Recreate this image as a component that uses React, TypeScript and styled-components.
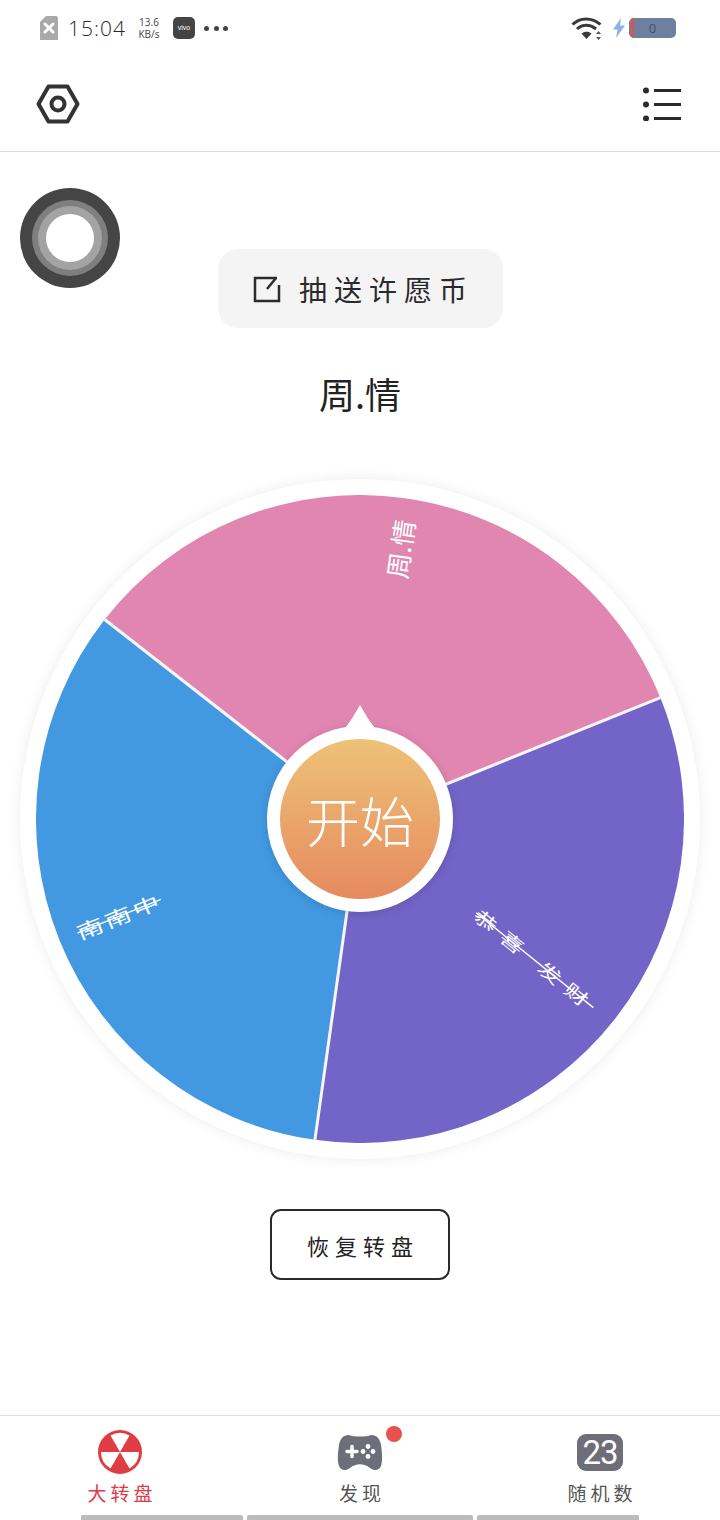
import styled, { createGlobalStyle } from "styled-components";

const GlobalStyle = createGlobalStyle`
  html, body { margin: 0; padding: 0; background: #fff; }
  * { box-sizing: border-box; }
`

const CJK = `"Noto Sans CJK SC", "Liberation Sans", sans-serif`

// start angle of the pink slice, each slice takes 120deg
const START = -142
const slices = [
  { color: "#e086b1" },
  { color: "#7364c8" },
  { color: "#4299e2" },
]

const polar = (deg: number, r: number, c = 324) => {
  const a = (deg * Math.PI) / 180
  return `${(c + r * Math.cos(a)).toFixed(2)} ${(c + r * Math.sin(a)).toFixed(2)}`
}

const wedge = (from: number, to: number, r: number) => {
  const a = (from * Math.PI) / 180
  const b = (to * Math.PI) / 180
  const p = (t: number) => `${(r * Math.cos(t)).toFixed(2)} ${(r * Math.sin(t)).toFixed(2)}`
  return `M0 0 L${p(a)} A${r} ${r} 0 0 1 ${p(b)} Z`
}

const App = () => {
  return (
    <Page>
      <GlobalStyle />
      <StatusBar>
        <StatusLeft>
          <svg width="18" height="24" viewBox="0 0 18 24">
            <path d="M6 0H16a2 2 0 0 1 2 2V24H0V6Z" fill="#a9a9a9" />
            <path d="M5 8l8 8M13 8l-8 8" stroke="#fff" strokeWidth="3" strokeLinecap="round" />
          </svg>
          <Clock>15:04</Clock>
          <Speed>13.6<br />KB/s</Speed>
          <VivoBadge>vivo</VivoBadge>
          <Dots>
            <i /><i /><i />
          </Dots>
        </StatusLeft>
        <StatusRight>
          <WifiIcon width="32" height="24" viewBox="0 0 32 24" fill="none">
            <path d="M1.500 8.500C9 1 21 1 29.500 8.500" stroke="#3a3a3a" strokeWidth="3" />
            <path d="M6 13c5.500-5 13-5 19 0" stroke="#3a3a3a" strokeWidth="3" />
            <path d="M10.500 17.500c3-2.500 7-2.500 10 0L15.500 23Z" fill="#3a3a3a" />
            <path d="M27.500 15l2.500 3h-5ZM27.500 24l2.500-3h-5Z" fill="#555" />
          </WifiIcon>
          <svg width="12" height="20" viewBox="0 0 12 20">
            <path d="M8 0L0 11.500h4.500L3 20 12 7.500H7Z" fill="#8cb0ee" />
          </svg>
          <Battery>
            <BatteryLevel />
            0
          </Battery>
        </StatusRight>
      </StatusBar>

      <Header>
        <svg width="44" height="40" viewBox="0 0 44 40" fill="none">
          <path d="M12.500 2.500H31.500L41.500 20 31.500 37.500H12.500L2.500 20Z" stroke="#333" strokeWidth="4" strokeLinejoin="round" />
          <circle cx="22" cy="20" r="6.500" stroke="#333" strokeWidth="4" />
        </svg>
        <svg width="40" height="34" viewBox="0 0 40 34">
          <circle cx="4" cy="3.500" r="3" fill="#2b2b2b" />
          <circle cx="4" cy="17.500" r="3" fill="#2b2b2b" />
          <circle cx="4" cy="31.500" r="3" fill="#2b2b2b" />
          <path d="M12 3.500H39M12 17.500H39M12 31.500H39" stroke="#2b2b2b" strokeWidth="3" />
        </svg>
      </Header>

      <Main>
        <FloatBall />
        <WishButton>
          <svg width="28" height="28" viewBox="0 0 28 28" fill="none">
            <path d="M24 3H2V26H26V10" stroke="#2b2b2b" strokeWidth="2.500" />
            <path d="M14 14L23 3" stroke="#2b2b2b" strokeWidth="2.500" />
          </svg>
          <WishText>抽送许愿币</WishText>
        </WishButton>
        <Result>周.情</Result>

        <Wheel>
          <svg width="648" height="648" viewBox="0 0 648 648">
            {slices.map((s, i) => {
              const from = START + i * 120
              return (
                <path
                  key={s.color}
                  d={`M324 324 L${polar(from, 324)} A324 324 0 0 1 ${polar(from + 120, 324)} Z`}
                  fill={s.color}
                />
              )
            })}
            {slices.map((s, i) => (
              <path
                key={s.color}
                d={`M324 324 L${polar(START + i * 120, 324)}`}
                stroke="#f6f6fb"
                strokeWidth="3"
              />
            ))}
          </svg>
          <SliceLabel $x={380} $y={70} $angle={-82}>周.情</SliceLabel>
          <SliceLabel $x={515} $y={481} $angle={39} $size={25} $spacing={9} $squash>恭喜 发财</SliceLabel>
          <SliceLabel $x={99} $y={437} $angle={-22} $size={27} $spacing={3} $squash>南南中</SliceLabel>
          <Hub>
            <StartButton>开始</StartButton>
          </Hub>
        </Wheel>

        <RestoreButton>恢复转盘</RestoreButton>
      </Main>

      <TabBar>
        <Tab $active>
          <svg width="44" height="44" viewBox="-22 -22 44 44">
            <circle r="22" fill="#e03c44" />
            <path d={wedge(-120, -60, 19)} fill="#fff" />
            <path d={wedge(0, 60, 19)} fill="#fff" />
            <path d={wedge(120, 180, 19)} fill="#fff" />
          </svg>
          <TabLabel>大转盘</TabLabel>
        </Tab>
        <Tab>
          <svg width="46" height="44" viewBox="0 0 46 44">
            <path
              d="M12 5C17 7 29 7 34 5C40 5 43 9 44 15C45 22 46 30 44 36C42 41 37 41 33 38C27 33 19 33 13 38C9 41 4 41 2 36C0 30 1 22 2 15C3 9 6 5 12 5Z"
              fill="#6d6e78"
            />
            <path d="M10 21.500H20M15 16.500V26.500" stroke="#fff" strokeWidth="3.500" strokeLinecap="round" />
            <circle cx="31" cy="16.500" r="2.400" fill="#fff" />
            <circle cx="31" cy="26.500" r="2.400" fill="#fff" />
            <circle cx="26" cy="21.500" r="2.400" fill="#fff" />
            <circle cx="36" cy="21.500" r="2.400" fill="#fff" />
          </svg>
          <RedDot />
          <TabLabel>发现</TabLabel>
        </Tab>
        <Tab>
          <NumberIcon>23</NumberIcon>
          <TabLabel>随机数</TabLabel>
        </Tab>
      </TabBar>
      <HomeBars>
        <HomeBar $width={162} />
        <HomeBar $width={226} />
        <HomeBar $width={162} />
      </HomeBars>
    </Page>
  )
}

export default App;

const Page = styled.div`
  width: 720px;
  height: 1520px;
  display: flex;
  flex-direction: column;
  overflow: hidden;
  background: #fff;
  font-family: ${CJK};
  color: #222;
`
const StatusBar = styled.div`
  height: 56px;
  padding: 16px 44px 0 40px;
  display: flex;
  justify-content: space-between;
  align-items: flex-start;
`
const StatusLeft = styled.div`
  display: flex;
  align-items: center;
  height: 24px;
`
const StatusRight = styled.div`
  display: flex;
  align-items: center;
  height: 24px;
  gap: 4px;
`
const WifiIcon = styled.svg`
  margin-right: 6px;
`
const Clock = styled.div`
  margin-left: 10px;
  width: 56px;
  font-family: "Open Sans", "Liberation Sans", sans-serif;
  font-weight: 300;
  font-size: 21px;
  letter-spacing: 1px;
  color: #2a2a2a;
  white-space: nowrap;
`
const Speed = styled.div`
  margin-left: 11px;
  width: 28px;
  font-family: "Open Sans", "Liberation Sans", sans-serif;
  font-size: 10px;
  line-height: 12px;
  color: #444;
  text-align: center;
`
const VivoBadge = styled.div`
  margin-left: 10px;
  width: 22px;
  height: 22px;
  border-radius: 5px;
  background: #444;
  color: #fff;
  font-family: "Liberation Sans", sans-serif;
  font-size: 7px;
  line-height: 22px;
  text-align: center;
`
const Dots = styled.div`
  margin-left: 9px;
  display: flex;
  gap: 4.500px;
  i {
    display: block;
    width: 5px;
    height: 5px;
    border-radius: 50%;
    background: #444;
  }
`
const Battery = styled.div`
  position: relative;
  width: 47px;
  height: 20px;
  border-radius: 5px;
  background: #6f7f9e;
  color: #3f4f78;
  font-family: "Open Sans", "Liberation Sans", sans-serif;
  font-size: 13px;
  line-height: 20px;
  text-align: center;
  overflow: hidden;
`
const BatteryLevel = styled.div`
  position: absolute;
  left: 2px;
  top: 0;
  bottom: 0;
  width: 3px;
  background: #d9534f;
`
const Header = styled.div`
  height: 96px;
  padding: 0 38px 0 36px;
  display: flex;
  justify-content: space-between;
  align-items: center;
  border-bottom: 1px solid #dcdcdc;
`
const Main = styled.div`
  position: relative;
  flex: 1;
  display: flex;
  flex-direction: column;
  align-items: center;
  padding-top: 97px;
`
const FloatBall = styled.div`
  position: absolute;
  left: 46px;
  top: 62px;
  width: 48px;
  height: 48px;
  border-radius: 50%;
  background: #fff;
  box-shadow: 0 0 0 8px #a3a3a3, 0 0 0 14px #7f7f7f, 0 0 0 26px #454545;
`
const WishButton = styled.div`
  width: 285px;
  height: 79px;
  border-radius: 20px;
  background: #f4f4f4;
  display: flex;
  align-items: center;
  justify-content: center;
  gap: 18px;
`
const WishText = styled.span`
  font-size: 28px;
  letter-spacing: 7px;
  margin-right: -7px;
  color: #2a2a2a;
`
const Result = styled.div`
  margin-top: 38px;
  height: 54px;
  font-size: 36px;
  line-height: 54px;
  color: #222;
`
const Wheel = styled.div`
  position: relative;
  margin-top: 59px;
  width: 680px;
  height: 680px;
  padding: 16px;
  border-radius: 50%;
  background: #fff;
  box-shadow: 0 0 14px rgba(0, 0, 0, 0.08);
  svg { display: block; }
`
const SliceLabel = styled.span<{ $x: number; $y: number; $angle: number; $size?: number; $spacing?: number; $squash?: boolean }>`
  position: absolute;
  left: ${(p) => p.$x}px;
  top: ${(p) => p.$y}px;
  transform: translate(-50%, -50%) rotate(${(p) => p.$angle}deg) scaleY(${(p) => (p.$squash ? 0.7 : 1)});
  color: #fff;
  font-size: ${(p) => p.$size ?? 26}px;
  line-height: 1;
  white-space: nowrap;
  text-decoration: ${(p) => (p.$squash ? "line-through" : "none")};
  letter-spacing: ${(p) => p.$spacing ?? 0}px;
`
const Hub = styled.div`
  position: absolute;
  left: 247px;
  top: 247px;
  width: 186px;
  height: 186px;
  border-radius: 50%;
  background: #fff;
  box-shadow: 0 2px 10px rgba(0, 0, 0, 0.14);
  display: flex;
  align-items: center;
  justify-content: center;
  &::before {
    content: "";
    position: absolute;
    left: 68px;
    top: -21px;
    width: 50px;
    height: 32px;
    background: #fff;
    clip-path: path("M0 32C12 24 19 10 25 0C31 10 38 24 50 32Z");
  }
`
const StartButton = styled.div`
  position: relative;
  width: 160px;
  height: 160px;
  border-radius: 50%;
  background: linear-gradient(#eec277, #e68a60);
  color: #fff;
  font-size: 54px;
  font-weight: 300;
  display: flex;
  align-items: center;
  justify-content: center;
`
const RestoreButton = styled.div`
  margin-top: 50px;
  width: 180px;
  height: 71px;
  border: 2px solid #2a2a2a;
  border-radius: 11px;
  display: flex;
  align-items: center;
  justify-content: center;
  font-size: 22px;
  letter-spacing: 6px;
  padding-left: 6px;
  color: #222;
`
const TabBar = styled.div`
  height: 105px;
  border-top: 1px solid #dedede;
  display: grid;
  grid-template-columns: repeat(3, 240px);
  padding-top: 14px;
`
const Tab = styled.div<{ $active?: boolean }>`
  position: relative;
  display: flex;
  flex-direction: column;
  align-items: center;
  height: 84px;
  color: ${(p) => (p.$active ? "#e0394a" : "#555")};
`
const RedDot = styled.div`
  position: absolute;
  left: 146px;
  top: -4px;
  width: 16px;
  height: 16px;
  border-radius: 50%;
  background: #e5534b;
`
const NumberIcon = styled.div`
  width: 46px;
  height: 37px;
  margin: 4px 0 3px;
  border-radius: 9px;
  background: #6d6e78;
  color: #fff;
  font-family: "Roboto", "Liberation Sans", sans-serif;
  font-size: 33px;
  line-height: 37px;
  text-align: center;
  letter-spacing: -1px;
`
const TabLabel = styled.div`
  margin-top: 6px;
  font-size: 19px;
  line-height: 26px;
  letter-spacing: 4px;
  margin-right: -4px;
`
const HomeBars = styled.div`
  height: 5px;
  margin-top: -5px;
  padding-left: 81px;
  display: flex;
  gap: 4px;
`
const HomeBar = styled.div<{ $width: number }>`
  width: ${(p) => p.$width}px;
  height: 5px;
  border-radius: 2px 2px 0 0;
  background: #bcbcbc;
`
